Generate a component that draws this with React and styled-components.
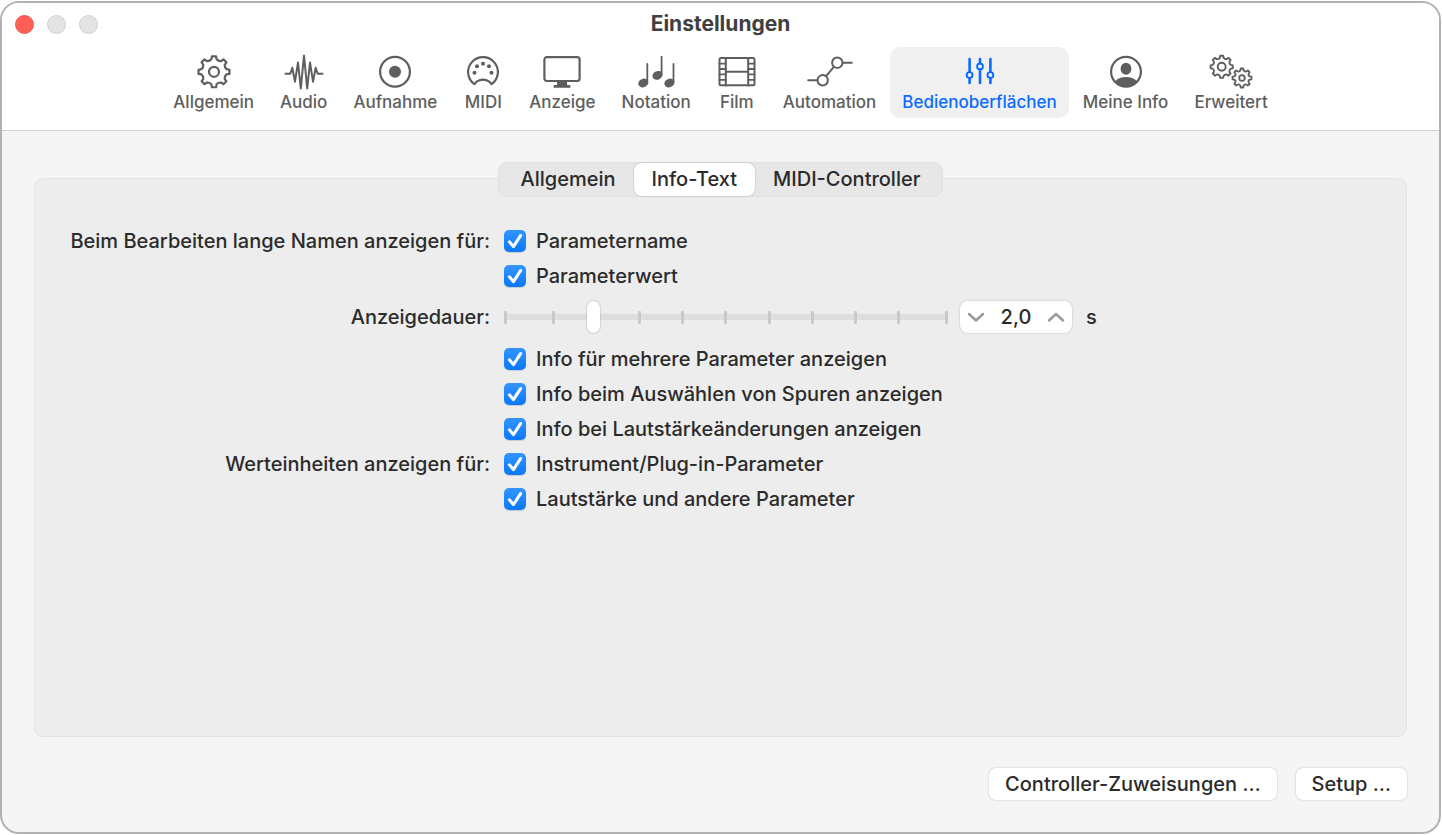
import { useState } from "react";
import styled, { createGlobalStyle } from "styled-components";

const GlobalStyle = createGlobalStyle`
    *, *::before, *::after{
        box-sizing: border-box;
    }

    body{
        margin: 0;
        background-color: #fff;
        color: #2b2b2b;
        font-family: Inter, "Liberation Sans", sans-serif;
        font-size: 20px;
        font-weight: 450;
        line-height: 24px;
    }

    button, input{
        font: inherit;
        color: inherit;
        margin: 0;
    }
`

const Frame = styled.div`
    display: flex;
    min-height: 100vh;
    padding: 1px 1px 1px 0;
`

const Window = styled.main`
    flex: 1;
    display: flex;
    flex-direction: column;
    border: 2px solid #b2b2b2;
    border-radius: 19px;
    background-color: #f5f5f5;
    overflow: hidden;
`

const Header = styled.header`
    background-color: #fff;
    border-bottom: 1px solid #d2d2d2;
    padding-bottom: 12px;
`

const TitleBar = styled.div`
    display: grid;
    grid-template-columns: 1fr auto 1fr;
    align-items: center;
    height: 42px;
    margin-bottom: 2px;
    padding: 0 13px;
`

const Title = styled.h1`
    margin: 0;
    font-size: 21px;
    line-height: 24px;
    font-weight: 700;
    color: #404040;
`

const WindowControls = styled.div`
    display: flex;
    gap: 13px;
`

const WindowControl = styled.button`
    width: 19px;
    height: 19px;
    padding: 0;
    border: 1px solid ${({$close}) => $close ? "#f0564e" : "#cfcfcf"};
    border-radius: 50%;
    background-color: ${({$close}) => $close ? "#ff5f57" : "#e4e4e4"};
`

const Toolbar = styled.nav`
    display: flex;
    justify-content: center;
    gap: 2px;
`

const ToolbarItem = styled.button`
    display: flex;
    flex-direction: column;
    align-items: center;
    gap: 1px;
    height: 71px;
    padding: 7px 12px 0;
    border: 0;
    border-radius: 10px;
    font-size: 17px;
    font-weight: 500;
    line-height: 22px;
    white-space: nowrap;
    background-color: ${({$active}) => $active ? "#f0f0f0" : "transparent"};
    color: ${({$active}) => $active ? "#0a6cff" : "#5e5e5e"};
`

const Content = styled.section`
    flex: 1;
    display: flex;
    flex-direction: column;
    padding: 31px 32px 32px;
`

const Segments = styled.div`
    align-self: center;
    z-index: 1;
    display: flex;
    height: 35px;
    margin-bottom: -19px;
    padding: 0 4px;
    border: 1px solid #e0e0e0;
    border-radius: 9px;
    background-color: #e7e7e7;
`

const Segment = styled.button`
    padding: 0 18px 2px;
    border: 0;
    border-radius: 8px;
    background-color: ${({$active}) => $active ? "#fff" : "transparent"};
    box-shadow: ${({$active}) => $active ? "0 0 2px rgba(0, 0, 0, 0.25)" : "none"};
`

const Panel = styled.div`
    flex: 1;
    display: grid;
    grid-template-columns: 455px 1fr;
    grid-auto-rows: min-content;
    column-gap: 14px;
    padding: 44px 0 24px;
    border: 1px solid #e4e4e4;
    border-radius: 9px;
    background-color: #ededed;
`

const RowLabel = styled.div`
    display: flex;
    align-items: center;
    justify-content: flex-end;
    white-space: nowrap;
`

const Row = styled.div`
    display: flex;
    align-items: center;
    height: ${({$tall}) => $tall ? "48px" : "35px"};
`

const CheckLabel = styled.label`
    display: flex;
    align-items: center;
    gap: 10px;
`

const CheckBox = styled.span`
    display: grid;

    input, svg{
        grid-area: 1 / 1;
        width: 22px;
        height: 22px;
    }

    input{
        appearance: none;
        border-radius: 5px;
        background-color: #fff;
        box-shadow: 0 1px 1px rgba(0, 0, 0, 0.15);
    }

    input:checked{
        background: linear-gradient(#3395ff, #0a78fa);
    }

    svg{
        pointer-events: none;
        visibility: hidden;
    }

    input:checked + svg{
        visibility: visible;
    }
`

const SliderBox = styled.div`
    display: grid;
    align-items: center;
    width: 444px;
    margin-right: 12px;
    background: linear-gradient(#dedede, #dedede) center / 100% 6px no-repeat;
`

const Ticks = styled.div`
    grid-area: 1 / 1;
    display: flex;
    justify-content: space-between;

    span{
        width: 3px;
        height: 13px;
        border-radius: 1px;
        background-color: #c9c9c9;
    }

    span:first-child{
        margin-right: 5px;
    }

    span:last-child{
        margin-left: 5px;
    }
`

const Slider = styled.input`
    grid-area: 1 / 1;
    z-index: 1;
    width: 100%;
    height: 32px;
    appearance: none;
    background: none;

    &::-webkit-slider-thumb{
        appearance: none;
        width: 13px;
        height: 32px;
        border-radius: 7px;
        background-color: #fff;
        box-shadow: 0 0 2px rgba(0, 0, 0, 0.35);
    }
`

const Stepper = styled.div`
    display: flex;
    align-items: center;
    width: 112px;
    height: 32px;
    margin-right: 14px;
    border-radius: 8px;
    background-color: #fff;
    box-shadow: 0 0 2px rgba(0, 0, 0, 0.25);

    button{
        display: flex;
        justify-content: center;
        width: 32px;
        padding: 0;
        border: 0;
        background: none;
    }

    input{
        width: 48px;
        padding: 0;
        border: 0;
        background: none;
        text-align: center;
    }
`

const Footer = styled.footer`
    display: flex;
    justify-content: flex-end;
    gap: 19px;
    padding-top: 31px;
`

const PushButton = styled.button`
    height: 32px;
    padding: 0 16px;
    border: 0;
    border-radius: 7px;
    background-color: #fff;
    box-shadow: 0 0 2px rgba(0, 0, 0, 0.25);
`

// closed outline of a gear with its first tooth pointing up
function gearPath(cx, cy, teeth, outer, root){
    const step = (Math.PI * 2) / teeth;
    const at = (angle, r) => `${(cx + r * Math.sin(angle)).toFixed(2)} ${(cy - r * Math.cos(angle)).toFixed(2)}`;
    let d = "";

    for(let i = 0; i < teeth; i++){
        const a = i * step;
        d += `${i ? "L" : "M"}${at(a - step * 0.17, outer)}L${at(a + step * 0.17, outer)}`;
        d += `L${at(a + step * 0.26, root + 0.6)}`;
        d += `Q${at(a + step * 0.5, root - 0.8)} ${at(a + step * 0.74, root + 0.6)}`;
    }

    return d + "Z";
}

function Icon({width = 40, children}){
    return (
        <svg
            width={width}
            height="36"
            viewBox={`0 0 ${width} 36`}
            fill="none"
            stroke="currentColor"
            strokeWidth="2.2"
            strokeLinecap="round"
            strokeLinejoin="round"
            aria-hidden="true"
        >
            {children}
        </svg>
    )
}

const icons = {
    gear: (
        <Icon>
            <path d={gearPath(20, 17.8, 8, 15.6, 12.2)} />
            <circle cx="20" cy="17.8" r="5" />
        </Icon>
    ),
    wave: (
        <Icon>
            <path strokeWidth="2" d="M1.5 19.7H6.3L8.3 13.7L11 27.7L14 8.5L16.8 34.5L20 1.5L23.2 34.5L26 8.5L29 27.7L31.7 13.7L33.7 19.7H38.5" />
        </Icon>
    ),
    record: (
        <Icon>
            <circle cx="20" cy="17.8" r="14.9" />
            <circle cx="20" cy="17.8" r="6" fill="currentColor" stroke="none" />
        </Icon>
    ),
    midi: (
        <Icon>
            <path d="M11.4 30.2A14.9 14.9 0 1 1 28.6 30.2L26.4 27.6Q20 23.6 13.6 27.6Z" />
            <g fill="currentColor" stroke="none">
                <circle cx="11.5" cy="18.7" r="2" />
                <circle cx="14" cy="12.3" r="2" />
                <circle cx="20" cy="9.8" r="2" />
                <circle cx="26" cy="12.3" r="2" />
                <circle cx="28.5" cy="18.7" r="2" />
            </g>
        </Icon>
    ),
    display: (
        <Icon>
            <rect x="2.4" y="3.2" width="35.2" height="23.8" rx="2.4" />
            <path fill="currentColor" stroke="none" d="M15 27H25V31H27.4Q28.4 31 28.4 32V33.8H11.6V32Q11.6 31 12.6 31H15Z" />
        </Icon>
    ),
    notes: (
        <Icon>
            <path strokeWidth="1.8" d="M11.3 10V28M25.6 2.6V20M37.5 10V28" />
            <g fill="currentColor" stroke="none">
                <ellipse cx="7.3" cy="29" rx="5.2" ry="4.2" transform="rotate(-24 7.3 29)" />
                <ellipse cx="21.5" cy="21.3" rx="5.2" ry="4.2" transform="rotate(-24 21.5 21.3)" />
                <ellipse cx="33.4" cy="29" rx="5.2" ry="4.2" transform="rotate(-24 33.4 29)" />
            </g>
        </Icon>
    ),
    film: (
        <Icon>
            <rect x="2.5" y="4.1" width="35" height="27.2" rx="1.6" strokeWidth="2" />
            <path strokeWidth="2" d="M8.8 4V31.4M31.2 4V31.4M8.8 17.7H31.2" />
            <path strokeWidth="1.8" d="M2.5 9.6H8.8M2.5 15H8.8M2.5 20.4H8.8M2.5 25.8H8.8M31.2 9.6H37.5M31.2 15H37.5M31.2 20.4H37.5M31.2 25.8H37.5" />
        </Icon>
    ),
    automation: (
        <Icon width={48}>
            <circle cx="16.7" cy="26.3" r="5.2" strokeWidth="2" />
            <circle cx="31.3" cy="8.7" r="5.2" strokeWidth="2" />
            <path strokeWidth="2" d="M2.2 26.3H11.4M36.6 8.7H45.8M20.1 22.2L27.9 12.8" />
        </Icon>
    ),
    faders: (
        <Icon>
            <path strokeWidth="2.6" d="M9.6 5V17.6M9.6 24.4V29M20 5V9M20 15.8V29M30.4 5V17.6M30.4 24.4V29" />
            <circle cx="9.6" cy="21" r="2.9" strokeWidth="1.9" />
            <circle cx="20" cy="12.4" r="2.9" strokeWidth="1.9" />
            <circle cx="30.4" cy="21" r="2.9" strokeWidth="1.9" />
        </Icon>
    ),
    person: (
        <Icon>
            <circle cx="20" cy="17.8" r="14.9" />
            <ellipse cx="20" cy="14.8" rx="5.4" ry="6" fill="currentColor" stroke="none" />
            <path fill="currentColor" stroke="none" d="M8.8 27.4Q13 23 20 23T31.2 27.4A15 15 0 0 1 8.8 27.4Z" />
        </Icon>
    ),
    gears: (
        <Icon width={48}>
            <path strokeWidth="1.9" d={gearPath(14.7, 12.8, 8, 11.2, 8.7)} />
            <circle cx="14.7" cy="12.8" r="4" strokeWidth="1.9" />
            <path strokeWidth="1.8" d={gearPath(35, 24, 8, 9.6, 7.3)} />
            <circle cx="35" cy="24" r="2.8" strokeWidth="1.8" />
        </Icon>
    ),
}

const toolbarItems = [
    {label: "Allgemein", icon: "gear"},
    {label: "Audio", icon: "wave"},
    {label: "Aufnahme", icon: "record"},
    {label: "MIDI", icon: "midi"},
    {label: "Anzeige", icon: "display"},
    {label: "Notation", icon: "notes"},
    {label: "Film", icon: "film"},
    {label: "Automation", icon: "automation"},
    {label: "Bedienoberflächen", icon: "faders"},
    {label: "Meine Info", icon: "person"},
    {label: "Erweitert", icon: "gears"},
]

const segments = ["Allgemein", "Info-Text", "MIDI-Controller"]

function CheckRow({children}){
    return (
        <Row>
            <CheckLabel>
                <CheckBox>
                    <input type="checkbox" defaultChecked />
                    <svg viewBox="0 0 22 22" fill="none" stroke="#fff" strokeWidth="3" strokeLinecap="round" strokeLinejoin="round">
                        <path d="M5.4 11.8L9.4 16.6L16.6 5.6" />
                    </svg>
                </CheckBox>
                {children}
            </CheckLabel>
        </Row>
    )
}

function Chevron({d}){
    return (
        <svg width="18" height="12" viewBox="0 0 18 12" fill="none" stroke="#999" strokeWidth="2.4" strokeLinecap="round" strokeLinejoin="round">
            <path d={d} />
        </svg>
    )
}

function App(){
    const [section, setSection] = useState("Bedienoberflächen");
    const [segment, setSegment] = useState("Info-Text");
    const [duration, setDuration] = useState(2);

    const changeDuration = (delta) => setDuration((value) => Math.min(10, Math.max(0.1, value + delta)));

    return (
        <Frame>
            <GlobalStyle />
            <Window>
                <Header>
                    <TitleBar>
                        <WindowControls>
                            <WindowControl $close aria-label="Schließen" />
                            <WindowControl disabled aria-label="Minimieren" />
                            <WindowControl disabled aria-label="Zoomen" />
                        </WindowControls>
                        <Title>Einstellungen</Title>
                    </TitleBar>
                    <Toolbar>
                        {
                            toolbarItems.map(({label, icon}) => (
                                <ToolbarItem key={label} $active={label === section} onClick={() => setSection(label)}>
                                    {icons[icon]}
                                    {label}
                                </ToolbarItem>
                            ))
                        }
                    </Toolbar>
                </Header>

                <Content>
                    <Segments>
                        {
                            segments.map((label) => (
                                <Segment key={label} $active={label === segment} onClick={() => setSegment(label)}>
                                    {label}
                                </Segment>
                            ))
                        }
                    </Segments>

                    <Panel>
                        <RowLabel>Beim Bearbeiten lange Namen anzeigen für:</RowLabel>
                        <CheckRow>Parametername</CheckRow>
                        <RowLabel />
                        <CheckRow>Parameterwert</CheckRow>

                        <RowLabel as="label" htmlFor="duration">Anzeigedauer:</RowLabel>
                        <Row $tall>
                            <SliderBox>
                                <Ticks>
                                    {Array.from({length: 11}, (_, i) => <span key={i} />)}
                                </Ticks>
                                <Slider
                                    id="duration"
                                    type="range"
                                    min="0.1"
                                    max="10"
                                    step="0.1"
                                    value={duration}
                                    onChange={(e) => setDuration(Number(e.target.value))}
                                />
                            </SliderBox>
                            <Stepper>
                                <button aria-label="Verringern" onClick={() => changeDuration(-0.1)}>
                                    <Chevron d="M2 3L9 9.5L16 3" />
                                </button>
                                <input aria-label="Anzeigedauer in Sekunden" value={duration.toFixed(1).replace(".", ",")} readOnly />
                                <button aria-label="Erhöhen" onClick={() => changeDuration(0.1)}>
                                    <Chevron d="M2 9.5L9 3L16 9.5" />
                                </button>
                            </Stepper>
                            s
                        </Row>

                        <RowLabel />
                        <CheckRow>Info für mehrere Parameter anzeigen</CheckRow>
                        <RowLabel />
                        <CheckRow>Info beim Auswählen von Spuren anzeigen</CheckRow>
                        <RowLabel />
                        <CheckRow>Info bei Lautstärkeänderungen anzeigen</CheckRow>

                        <RowLabel>Werteinheiten anzeigen für:</RowLabel>
                        <CheckRow>Instrument/Plug-in-Parameter</CheckRow>
                        <RowLabel />
                        <CheckRow>Lautstärke und andere Parameter</CheckRow>
                    </Panel>

                    <Footer>
                        <PushButton>Controller-Zuweisungen …</PushButton>
                        <PushButton>Setup …</PushButton>
                    </Footer>
                </Content>
            </Window>
        </Frame>
    )
}

export default App;
